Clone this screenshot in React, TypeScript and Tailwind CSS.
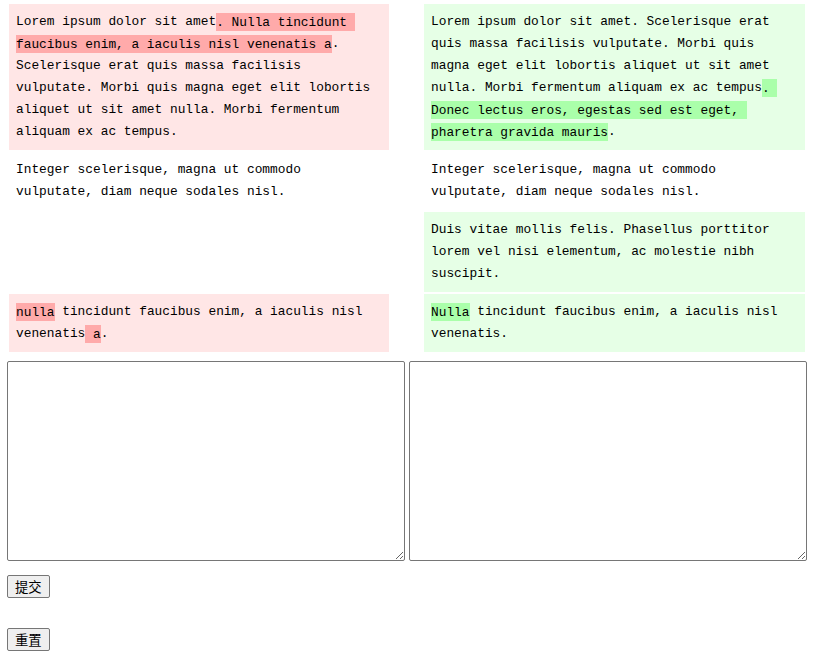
import React from "react"

const DEL = "bg-[#ffaaaa] py-[1.5px]"
const ADD = "bg-[#aaffaa] py-[1.5px]"

function Cell({ tone, children }: { tone?: "del" | "add"; children?: React.ReactNode }) {
  const bg = tone === "del" ? "bg-[#ffe6e6]" : tone === "add" ? "bg-[#e6ffe6]" : ""
  return <div className={`${bg} px-[7px] py-[7px] whitespace-pre-wrap break-words`}>{children}</div>
}

export default function App() {
  return (
    <div className="min-h-[666px] bg-white text-black">
      <div className="grid grid-cols-[380px_381px] gap-x-[35px] gap-y-[2px] pl-[9px] pt-[4px] font-['Liberation_Mono',monospace] text-[12.83px] leading-[22px]">
        <Cell tone="del">
          {"Lorem ipsum dolor sit amet"}
          <span className={DEL}>{". Nulla tincidunt faucibus enim, a iaculis nisl venenatis a"}</span>
          {". Scelerisque erat quis massa facilisis vulputate. Morbi quis magna eget elit lobortis aliquet ut sit amet nulla. Morbi fermentum aliquam ex ac tempus."}
        </Cell>
        <Cell tone="add">
          {"Lorem ipsum dolor sit amet. Scelerisque erat quis massa facilisis vulputate. Morbi quis magna eget elit lobortis aliquet ut sit amet nulla. Morbi fermentum aliquam ex ac tempus"}
          <span className={ADD}>{". Donec lectus eros, egestas sed est eget, pharetra gravida mauris"}</span>
          {"."}
        </Cell>

        <Cell>{"Integer scelerisque, magna ut commodo vulputate, diam neque sodales nisl."}</Cell>
        <Cell>{"Integer scelerisque, magna ut commodo vulputate, diam neque sodales nisl."}</Cell>

        <div />
        <Cell tone="add">{"Duis vitae mollis felis. Phasellus porttitor lorem vel nisi elementum, ac molestie nibh suscipit."}</Cell>

        <Cell tone="del">
          <span className={DEL}>nulla</span>
          {" tincidunt faucibus enim, a iaculis nisl venenatis"}
          <span className={DEL}>{" a"}</span>
          {"."}
        </Cell>
        <Cell tone="add">
          <span className={ADD}>Nulla</span>
          {" tincidunt faucibus enim, a iaculis nisl venenatis."}
        </Cell>
      </div>

      <div className="flex gap-[4px] pl-[7px] mt-[9px]">
        <textarea className="w-[398px] h-[200px] border border-[#767676] rounded-[2px] bg-white" />
        <textarea className="w-[398px] h-[200px] border border-[#767676] rounded-[2px] bg-white" />
      </div>

      <div className="flex flex-col items-start gap-[30px] pl-[7px] mt-[14px] font-['Noto_Sans_CJK_SC',sans-serif] text-[13.33px]">
        <button className="h-[23px] px-[7px] leading-none bg-[#efefef] border border-[#767676] rounded-[2px]">提交</button>
        <button className="h-[23px] px-[7px] leading-none bg-[#efefef] border border-[#767676] rounded-[2px]">重置</button>
      </div>
    </div>
  )
}
